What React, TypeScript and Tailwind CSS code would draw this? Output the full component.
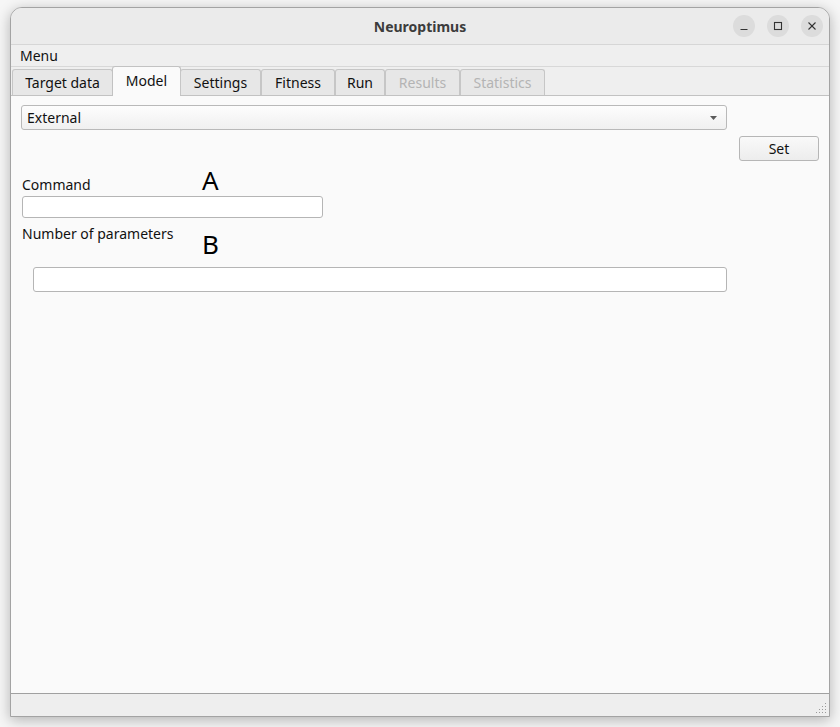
const tabs = [
  { label: "Target data", w: 101, state: "normal" },
  { label: "Model", w: 68, state: "active" },
  { label: "Settings", w: 81, state: "normal" },
  { label: "Fitness", w: 74, state: "normal" },
  { label: "Run", w: 50, state: "normal" },
  { label: "Results", w: 75, state: "disabled" },
  { label: "Statistics", w: 85, state: "disabled" },
];

const font = { fontFamily: '"Noto Sans", "Open Sans", sans-serif' };

const TitleButton = ({ kind }: { kind: "min" | "max" | "close" }) => (
  <div className="w-[22px] h-[22px] rounded-full bg-[#dcdcdc] flex items-center justify-center">
    <svg width="10" height="10" viewBox="0 0 10 10" fill="none" stroke="#333" strokeWidth="1.1">
      {kind === "min" && <line x1="1.5" y1="8.5" x2="8.5" y2="8.5" />}
      {kind === "max" && <rect x="1.5" y="1.5" width="7" height="7" />}
      {kind === "close" && (
        <>
          <line x1="1.5" y1="1.5" x2="8.5" y2="8.5" />
          <line x1="8.5" y1="1.5" x2="1.5" y2="8.5" />
        </>
      )}
    </svg>
  </div>
);

const ResizeGrip = () => {
  const dots: [number, number][] = [];
  for (let r = 0; r < 4; r++) {
    for (let c = 3 - r; c < 4; c++) dots.push([c * 3, r * 3]);
  }
  return (
    <svg className="absolute right-[2px] bottom-[2px]" width="11" height="11" viewBox="0 0 11 11">
      {dots.map(([x, y]) => (
        <rect key={`${x}-${y}`} x={x} y={y} width="1" height="1" fill="#9a9a9a" />
      ))}
    </svg>
  );
};

const App = () => {
  return (
    <div className="w-[840px] h-[727px] bg-[#f6f6f6] pt-[7px] pl-[10px] text-[14px] text-[#111]" style={font}>
      <div className="w-[820px] h-[710px] flex flex-col rounded-t-[12px] border border-[#a3a3a3] overflow-hidden shadow-[0_3px_14px_rgba(0,0,0,0.28)] bg-[#efefef]">
        {/* title bar */}
        <div className="relative h-[37px] shrink-0 bg-[#ebebeb] border-b border-[#d6d6d6] flex items-center justify-center">
          <span className="font-bold text-[#3c3c3c] text-[14px]">Neuroptimus</span>
          <div className="absolute right-[6px] top-[7px] flex gap-[12px]">
            <TitleButton kind="min" />
            <TitleButton kind="max" />
            <TitleButton kind="close" />
          </div>
        </div>

        {/* menu bar */}
        <div className="h-[22px] shrink-0 border-b border-[#d8d8d8] flex items-center pl-[9px]">
          <span>Menu</span>
        </div>

        {/* tab bar */}
        <div className="h-[28px] shrink-0 flex items-end pl-[1px] relative z-10">
          {tabs.map((t) =>
            t.state === "active" ? (
              <div
                key={t.label}
                className="h-[30px] -mb-[1px] -mx-[1px] bg-[#fafafa] border border-b-0 border-[#c2c2c2] rounded-t-[3px] flex items-center justify-center pb-[2px]"
                style={{ width: t.w + 1 }}
              >
                {t.label}
              </div>
            ) : (
              <div
                key={t.label}
                className={`h-[26px] bg-[#e7e7e7] border border-b-0 border-[#c6c6c6] rounded-t-[3px] flex items-center justify-center ${
                  t.state === "disabled" ? "text-[#b4b4b4]" : ""
                }`}
                style={{ width: t.w }}
              >
                {t.label}
              </div>
            )
          )}
        </div>

        {/* tab pane */}
        <div className="flex-1 bg-[#fafafa] border-t border-b border-[#c2c2c2] border-b-[#a0a0a0] px-[10px] pt-[9px] flex flex-col">
          <div className="w-[706px] h-[25px] rounded-[3px] border border-[#b9b9b9] bg-gradient-to-b from-[#fdfdfd] to-[#f0f0f0] flex items-center justify-between pl-[5px] pr-[9px]">
            <span>External</span>
            <svg width="7" height="4" viewBox="0 0 7 4">
              <polygon points="0,0 7,0 3.5,4" fill="#5a5a5a" />
            </svg>
          </div>

          <div className="flex justify-end mt-[6px]">
            <div className="w-[80px] h-[25px] rounded-[3px] border border-[#b6b6b6] bg-gradient-to-b from-[#f9f9f9] to-[#ededed] flex items-center justify-center">
              Set
            </div>
          </div>

          <div className="flex items-baseline mt-[6px]">
            <span className="w-[181px] pl-[1px] leading-[18px]">Command</span>
            <span className="text-[26px] leading-[26px] text-black">A</span>
          </div>

          <div className="ml-[1px] mt-[2px] w-[301px] h-[22px] rounded-[3px] border border-[#b5b5b5] bg-white" />

          <div className="flex items-start mt-[7px]">
            <span className="w-[181px] pl-[1px] leading-[18px]">Number of parameters</span>
            <span className="mt-[6px] text-[26px] leading-[26px] text-black">B</span>
          </div>

          <div className="ml-[12px] mt-[10px] w-[694px] h-[25px] rounded-[3px] border border-[#b5b5b5] bg-white" />
        </div>

        {/* status bar */}
        <div className="relative h-[22px] shrink-0 bg-[#eeeeee]">
          <ResizeGrip />
        </div>
      </div>
    </div>
  );
};

export default App;
